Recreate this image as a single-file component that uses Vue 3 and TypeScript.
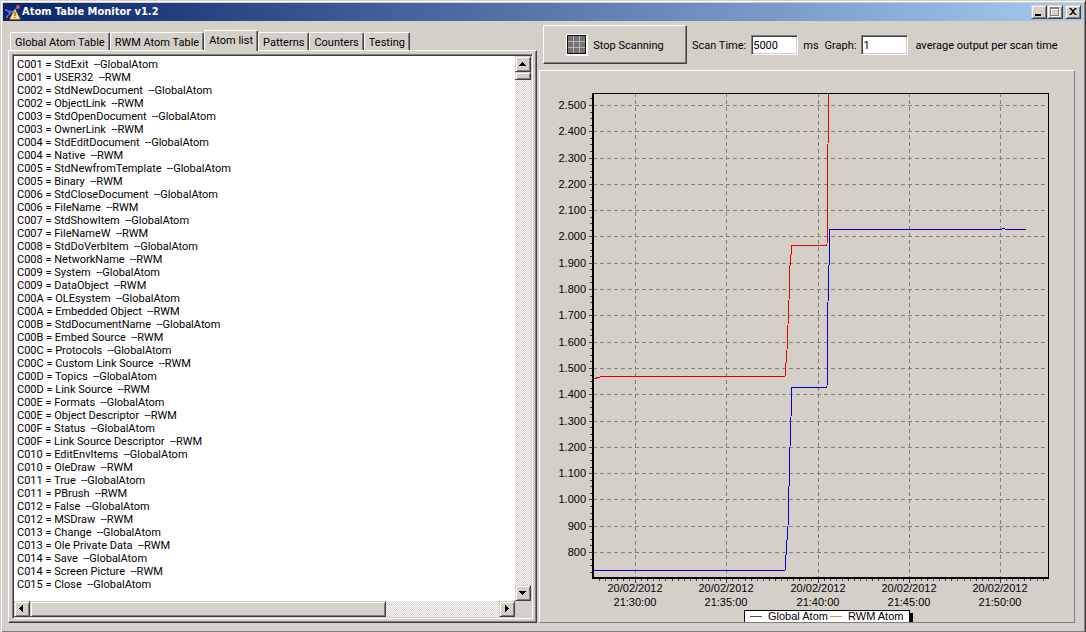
<script setup lang="ts">
import { computed, ref } from 'vue'

type Point = [minute: number, value: number]

const tabs = ['Global Atom Table', 'RWM Atom Table', 'Atom list', 'Patterns', 'Counters', 'Testing']
const activeTab = ref('Atom list')

const pairs: [string, string, string][] = [
  ['C001', 'StdExit', 'USER32'],
  ['C002', 'StdNewDocument', 'ObjectLink'],
  ['C003', 'StdOpenDocument', 'OwnerLink'],
  ['C004', 'StdEditDocument', 'Native'],
  ['C005', 'StdNewfromTemplate', 'Binary'],
  ['C006', 'StdCloseDocument', 'FileName'],
  ['C007', 'StdShowItem', 'FileNameW'],
  ['C008', 'StdDoVerbItem', 'NetworkName'],
  ['C009', 'System', 'DataObject'],
  ['C00A', 'OLEsystem', 'Embedded Object'],
  ['C00B', 'StdDocumentName', 'Embed Source'],
  ['C00C', 'Protocols', 'Custom Link Source'],
  ['C00D', 'Topics', 'Link Source'],
  ['C00E', 'Formats', 'Object Descriptor'],
  ['C00F', 'Status', 'Link Source Descriptor'],
  ['C010', 'EditEnvItems', 'OleDraw'],
  ['C011', 'True', 'PBrush'],
  ['C012', 'False', 'MSDraw'],
  ['C013', 'Change', 'Ole Private Data'],
  ['C014', 'Save', 'Screen Picture'],
]
const atomText = computed(() =>
  [
    ...pairs.flatMap(([id, global, rwm]) => [`${id} = ${global}  --GlobalAtom`, `${id} = ${rwm}  --RWM`]),
    'C015 = Close  --GlobalAtom',
  ].join('\n'),
)

const scanTime = ref('5000')
const graphAverage = ref('1')

const plot = { left: 53, top: 22, right: 508, bottom: 506 }
const xOf = (minute: number) => Math.round(95 + minute * 18.25)
const yOf = (value: number) => Math.round(481 - ((value - 800) * 447) / 1700)

const yTicks = Array.from({ length: 18 }, (_, i) => 800 + i * 100).map((v) => ({
  y: yOf(v),
  label: v >= 1000 ? `${Math.floor(v / 1000)}.${String(v % 1000).padStart(3, '0')}` : String(v),
}))
const xTicks = [0, 5, 10, 15, 20].map((m) => ({ x: xOf(m), label: `21:${30 + m}:00` }))
const xMinor = Array.from({ length: 75 }, (_, i) => xOf((i - 6) / 3)).filter((x) => x > plot.left && x < plot.right)
const yMinor = Array.from({ length: 74 }, (_, i) => yOf(725 + i * 25)).filter((y) => y > plot.top && y < plot.bottom)

const globalSeries: Point[] = [
  [-2.3, 731], [8.22, 731], [8.36, 900], [8.5, 1200], [8.6, 1427], [10.52, 1427],
  [10.6, 1750], [10.7, 2028], [20.1, 2028], [20.2, 2032], [20.3, 2028], [21.4, 2028],
]
const rwmSeries: Point[] = [
  [-2.3, 1458], [-1.9, 1464], [-0.8, 1468], [8.22, 1468], [8.33, 1570], [8.44, 1760],
  [8.5, 1890], [8.6, 1967], [10.52, 1967], [10.58, 2350], [10.65, 2560],
]
const toLine = (points: Point[]) => points.map(([m, v]) => `${xOf(m)},${yOf(v)}`).join(' ')
</script>

<template>
  <main class="window">
    <header class="titlebar">
      <svg class="app-icon" viewBox="0 0 16 16" aria-hidden="true">
        <path d="M1 6 L6 9 L13 3 M1 13 L6 9" fill="none" stroke="#a08fe0" stroke-width="1" />
        <circle cx="1" cy="6" r="1" fill="#e04a6a" />
        <circle cx="5" cy="8" r="2" fill="#4a66e0" />
        <circle cx="13" cy="3" r="2" fill="#d84878" />
        <circle cx="2" cy="13" r="1" fill="#e05a50" />
        <path d="M10 6 L15 15 H5 Z" fill="#ffe08a" stroke="#f3c35c" stroke-width="1" stroke-linejoin="round" />
        <path d="M10 8 V12 M10 13 V14" stroke="#5a4010" stroke-width="1" />
      </svg>
      <h1>Atom Table Monitor v1.2</h1>
      <div class="window-buttons">
        <button type="button" class="raised" aria-label="Minimize">
          <svg viewBox="0 0 12 10"><path d="M2 7h6v2H2z" fill="#000" /></svg>
        </button>
        <button type="button" class="raised" aria-label="Maximize" disabled>
          <svg viewBox="0 0 12 10">
            <path d="M2 1h9v9H2z M3 3v6h7V3z" fill="#fff" fill-rule="evenodd" />
            <path d="M1 0h9v9H1z M2 2v6h7V2z" fill="#808080" fill-rule="evenodd" />
          </svg>
        </button>
        <button type="button" class="raised close" aria-label="Close">
          <svg viewBox="0 0 12 10">
            <path d="M2 1h2l2 2 2-2h2L7 4v1l3 3H8L6 6 4 8H2l3-3V4z" fill="#000" />
          </svg>
        </button>
      </div>
    </header>

    <div class="body">
      <section class="left">
        <div class="tabs" role="tablist">
          <button
            v-for="tab in tabs"
            :key="tab"
            type="button"
            role="tab"
            class="tab"
            :class="{ active: tab === activeTab }"
            :aria-selected="tab === activeTab"
            @click="activeTab = tab"
          >{{ tab }}</button>
        </div>
        <div class="page" role="tabpanel">
          <div class="memo">
            <textarea aria-label="Atom list" readonly wrap="off" spellcheck="false" :value="atomText"></textarea>
            <div class="vscroll">
              <button type="button" class="raised arrow" aria-label="Scroll up">
                <svg viewBox="0 0 12 12"><path d="M5 4h1v1h1v1h1v1h1v1H2V7h1V6h1V5h1z" /></svg>
              </button>
              <div class="raised vthumb"></div>
              <div class="track"></div>
              <button type="button" class="raised arrow" aria-label="Scroll down">
                <svg viewBox="0 0 12 12"><path d="M2 4h7v1H8v1H7v1H6v1H5V7H4V6H3V5H2z" /></svg>
              </button>
            </div>
            <div class="hscroll">
              <button type="button" class="raised arrow" aria-label="Scroll left">
                <svg viewBox="0 0 12 12"><path d="M7 2v7H6V8H5V7H4V6H3V5h1V4h1V3h1V2z" /></svg>
              </button>
              <div class="raised hthumb"></div>
              <div class="track"></div>
              <button type="button" class="raised arrow" aria-label="Scroll right">
                <svg viewBox="0 0 12 12"><path d="M4 2h1v1h1v1h1v1h1v1H7v1H6v1H5v1H4z" /></svg>
              </button>
            </div>
          </div>
        </div>
      </section>

      <section class="right">
        <form class="toolbar" @submit.prevent>
          <button type="button" class="scan">
            <svg viewBox="0 0 22 22" aria-hidden="true">
              <path d="M0 0h22v22H0z" fill="#fff" />
              <path d="M1 1h19v19H1z" fill="#111" />
              <path d="M2 2h17v17H2z" fill="#737373" />
              <path d="M7 2V19 M13 2V19 M2 7H19 M2 13H19" stroke="#b4b4b4" shape-rendering="crispEdges" />
            </svg>
            <span>Stop Scanning</span>
          </button>
          <label for="scan-time">Scan Time:</label>
          <input id="scan-time" v-model="scanTime" type="text" />
          <span>ms</span>
          <label class="graph-label" for="graph-average">Graph:</label>
          <input id="graph-average" v-model="graphAverage" type="text" />
          <span class="suffix">average output per scan time</span>
        </form>

        <div class="chart-panel">
          <svg class="chart" viewBox="0 0 534 551" role="img" aria-label="Atom counts over time">
            <defs>
              <clipPath id="plot-area">
                <rect :x="plot.left" :y="plot.top" :width="plot.right - plot.left" :height="plot.bottom - plot.top" />
              </clipPath>
            </defs>
            <g class="grid">
              <line v-for="t in yTicks" :key="t.y" :x1="plot.left" :x2="plot.right" :y1="t.y" :y2="t.y" />
              <line v-for="t in xTicks" :key="t.x" :x1="t.x" :x2="t.x" :y1="plot.top" :y2="plot.bottom" />
            </g>
            <g class="ticks">
              <line v-for="t in yTicks" :key="t.y" :x1="49" :x2="52" :y1="t.y" :y2="t.y" />
              <line v-for="y in yMinor" :key="y" :x1="50" :x2="52" :y1="y" :y2="y" />
              <line v-for="t in xTicks" :key="t.x" :x1="t.x" :x2="t.x" :y1="508" :y2="512" />
              <line v-for="x in xMinor" :key="x" :x1="x" :x2="x" :y1="508" :y2="510" />
            </g>
            <g clip-path="url(#plot-area)">
              <polyline class="series rwm" :points="toLine(rwmSeries)" />
              <polyline class="series global" :points="toLine(globalSeries)" />
            </g>
            <path d="M52 22H509V508H52z M54 23V506H508V23z" fill="#000" fill-rule="evenodd" />
            <g class="axis-labels">
              <text v-for="t in yTicks" :key="t.y" x="46" :y="t.y + 4" text-anchor="end">{{ t.label }}</text>
              <template v-for="t in xTicks" :key="t.x">
                <text :x="t.x" y="521" text-anchor="middle">20/02/2012</text>
                <text :x="t.x" y="535" text-anchor="middle">{{ t.label }}</text>
              </template>
            </g>
            <g class="legend">
              <rect x="208" y="542" width="165" height="9" fill="#000" />
              <rect x="204" y="539" width="166" height="12" fill="#000" />
              <rect x="205" y="540" width="164" height="11" fill="#fff" />
              <rect x="210" y="545" width="12" height="1" fill="#3c4a8e" />
              <text x="228" y="549">Global Atom</text>
              <rect x="290" y="545" width="12" height="1" fill="#c89a40" />
              <text x="308" y="549">RWM Atom</text>
            </g>
          </svg>
        </div>
      </section>
    </div>
  </main>
</template>

<style>
body {
  margin: 0;
  background: #d4d0c8;
}
</style>

<style scoped>
.window {
  box-sizing: border-box;
  min-height: 100vh;
  display: flex;
  flex-direction: column;
  background: #d4d0c8;
  border: 1px solid;
  border-color: #d4d0c8 #404040 #404040 #d4d0c8;
  box-shadow: inset 1px 1px #fff, inset -1px -1px #808080;
  padding: 2px;
  font: 11px/13px Roboto, "DejaVu Sans Condensed", sans-serif;
  color: #000;
}
button,
input,
textarea {
  box-sizing: border-box;
  margin: 0;
  padding: 0;
  border: 0;
  border-radius: 0;
  font: inherit;
  color: inherit;
  background: #d4d0c8;
}
svg {
  display: block;
}
.raised {
  box-sizing: border-box;
  background: #d4d0c8;
  border: 1px solid;
  border-color: #d4d0c8 #404040 #404040 #d4d0c8;
  box-shadow: inset 1px 1px #fff, inset -1px -1px #808080;
}
.titlebar {
  display: flex;
  align-items: center;
  height: 18px;
  padding: 0 2px;
  background: linear-gradient(90deg, #0a246a, #a6caf0);
  color: #fff;
}
.app-icon {
  width: 16px;
  height: 16px;
}
h1 {
  flex: 1;
  margin: 0 0 0 1px;
  font: bold 11px/18px "DejaVu Sans Condensed", sans-serif;
}
.window-buttons {
  display: flex;
}
.window-buttons button {
  width: 16px;
  height: 14px;
  padding: 1px;
}
.window-buttons svg {
  width: 12px;
  height: 10px;
}
.window-buttons .close {
  margin-left: 2px;
}
.body {
  flex: 1;
  display: grid;
  grid-template-columns: 529fr 536fr;
  gap: 2px;
  padding: 4px 8px 7px 5px;
}
.left,
.right {
  display: flex;
  flex-direction: column;
  min-width: 0;
}
.left {
  padding-top: 5px;
}
.tabs {
  display: flex;
  align-items: flex-end;
  height: 20px;
  padding-left: 2px;
}
.tab {
  height: 18px;
  padding: 1px 4px 0;
  border: 1px solid;
  border-color: #fff #404040 transparent #fff;
  border-bottom: 0;
  border-radius: 2px 2px 0 0;
  box-shadow: inset -1px 0 #808080;
  white-space: nowrap;
}
.tab.active {
  z-index: 1;
  height: 21px;
  margin-bottom: -1px;
  padding-bottom: 3px;
}
.page {
  flex: 1;
  display: flex;
  padding: 3px;
  border: 1px solid;
  border-color: #fff #404040 #404040 #fff;
  box-shadow: inset -1px -1px #808080;
}
.memo {
  flex: 1;
  display: grid;
  grid-template: 1fr 16px / 1fr 16px;
  border: 1px solid;
  border-color: #808080 #fff #fff #808080;
  box-shadow: inset 1px 1px #404040;
  padding: 1px;
}
textarea {
  width: 100%;
  height: 100%;
  min-height: 545px;
  padding: 2px 3px 0;
  background: #fff;
  resize: none;
  outline: 0;
  overflow: hidden;
}
.vscroll {
  display: flex;
  flex-direction: column;
}
.hscroll {
  display: flex;
}
.arrow {
  width: 16px;
  height: 16px;
  padding: 1px;
}
.arrow svg {
  width: 12px;
  height: 12px;
}
.vthumb {
  height: 8px;
}
.hthumb {
  width: 71%;
}
.track {
  flex: 1;
  background: repeating-conic-gradient(#fff 0 25%, #d4d0c8 0 50%) 0 0 / 2px 2px;
}
.toolbar {
  display: flex;
  align-items: center;
  height: 39px;
  margin: 0 0 6px 4px;
  white-space: nowrap;
}
.toolbar label,
.toolbar span {
  padding-top: 2px;
}
.scan {
  display: flex;
  align-items: center;
  justify-content: center;
  gap: 5px;
  width: 144px;
  height: 39px;
  margin-right: 5px;
  border: 1px solid;
  border-color: #fff #404040 #404040 #fff;
  box-shadow: inset -1px -1px #808080;
}
.scan svg {
  width: 22px;
  height: 22px;
}
.toolbar input {
  width: 47px;
  height: 20px;
  margin: 1px 5px 0;
  padding: 0 1px;
  background: #fff;
  border: 1px solid;
  border-color: #808080 #fff #fff #808080;
  box-shadow: inset 1px 1px #404040, inset -1px -1px #d4d0c8;
}
.graph-label {
  margin-left: 6px;
}
.suffix {
  margin-left: 2px;
}
.chart-panel {
  flex: 1;
  border: 1px solid;
  border-color: #fff #808080 #808080 #fff;
}
.chart {
  width: 100%;
  font: 11px "Liberation Sans", Arial, sans-serif;
}
.grid line {
  stroke: #808080;
  stroke-dasharray: 4 3;
  shape-rendering: crispEdges;
}
.ticks line {
  stroke: #404040;
  shape-rendering: crispEdges;
}
.series {
  fill: none;
  shape-rendering: crispEdges;
}
.rwm {
  stroke: #e80000;
}
.global {
  stroke: #0000d0;
}
</style>
